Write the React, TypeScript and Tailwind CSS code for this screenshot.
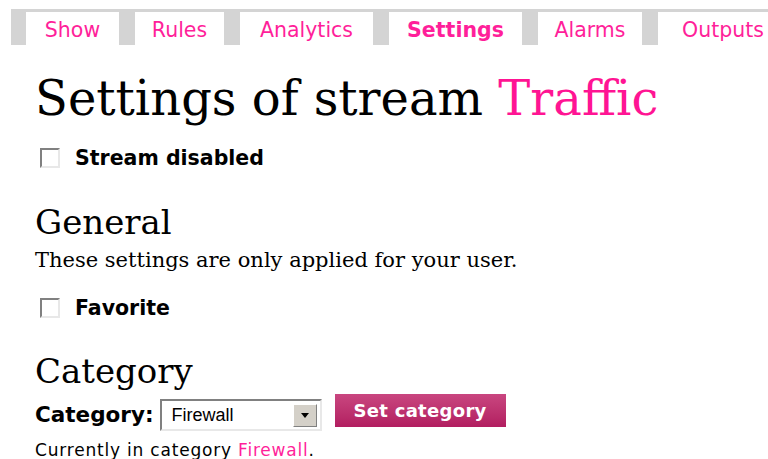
import { useState } from 'react';

const tabs = [
  { label: 'Show', w: 'w-[93px]' },
  { label: 'Rules', w: 'w-[89px]' },
  { label: 'Analytics', w: 'w-[133px]' },
  { label: 'Settings', w: 'w-[133px]', active: true },
  { label: 'Alarms', w: 'w-[104px]' },
  { label: 'Outputs', w: 'w-[130px]' },
];

function Checkbox({ checked, onToggle }: { checked: boolean; onToggle: () => void }) {
  return (
    <span
      onClick={onToggle}
      className="inline-flex w-[20px] h-[20px] border-2 border-t-[#808080] border-l-[#808080] border-b-[#e8e8e8] border-r-[#e8e8e8] bg-white items-center justify-center text-[13px] leading-none"
    >
      {checked ? '✓' : ''}
    </span>
  );
}

export default function App() {
  const [disabled, setDisabled] = useState(false);
  const [favorite, setFavorite] = useState(false);

  return (
    <div className="w-[768px] h-[459px] bg-white overflow-hidden text-black">
      {/* Stream tabs */}
      <nav className="mt-[9px] ml-[11px] h-[36px] bg-[#d4d4d4] flex items-end gap-4 pl-[15px] font-['DejaVu_Sans',sans-serif] text-[20.5px] text-[#ff1f9a]">
        {tabs.map((t) => (
          <a
            key={t.label}
            className={`${t.w} shrink-0 h-[33px] pt-[3px] bg-white flex items-center justify-center ${t.active ? 'font-bold' : ''}`}
          >
            {t.label}
          </a>
        ))}
      </nav>

      <div className="pl-[35px]">
        <h1 className="mt-[25px] font-['DejaVu_Serif',serif] text-[48px] leading-[56px]">
          Settings of stream <span className="text-[#ff1493]">Traffic</span>
        </h1>

        <label className="mt-[20px] ml-[5px] flex items-center gap-[15px] font-['DejaVu_Sans',sans-serif] font-bold text-[20.5px] leading-[24px]">
          <Checkbox checked={disabled} onToggle={() => setDisabled(!disabled)} />
          Stream disabled
        </label>

        <h2 className="mt-[32px] font-['DejaVu_Serif',serif] text-[34px] leading-[40px]">General</h2>
        <p className="mt-[4px] font-['DejaVu_Serif',serif] text-[21px] leading-[28px]">
          These settings are only applied for your user.
        </p>

        <label className="mt-[22px] ml-[5px] flex items-center gap-[15px] font-['DejaVu_Sans',sans-serif] font-bold text-[20.5px] leading-[24px]">
          <Checkbox checked={favorite} onToggle={() => setFavorite(!favorite)} />
          Favorite
        </label>

        <h2 className="mt-[31px] font-['DejaVu_Serif',serif] text-[34px] leading-[40px]">Category</h2>

        <div className="mt-[8px] flex items-center">
          <span className="font-['DejaVu_Sans',sans-serif] font-bold text-[21.5px] mr-[6px]">Category:</span>
          <div className="w-[162px] h-[32px] border-2 border-t-[#808080] border-l-[#808080] border-b-[#e8e8e8] border-r-[#e8e8e8] bg-white flex items-center justify-between pl-[10px] pr-[3px]">
            <span className="font-['Liberation_Sans',sans-serif] text-[18px]">Firewall</span>
            <span className="w-[24px] h-[23px] bg-[#d4d0c8] border border-t-white border-l-white border-b-[#808080] border-r-[#808080] flex items-center justify-center">
              <svg width="8" height="5" viewBox="0 0 8 5">
                <path d="M0 0h8L4 5z" fill="#000" />
              </svg>
            </span>
          </div>
          <button className="ml-[13px] w-[171px] h-[33px] bg-gradient-to-b from-[#c94680] to-[#b21d60] text-white font-['DejaVu_Sans',sans-serif] font-bold text-[18px] tracking-[0.3px] self-start -mt-[5px]">
            Set category
          </button>
        </div>

        <p className="mt-[7px] font-['DejaVu_Sans',sans-serif] text-[17px] tracking-[0.8px]">
          Currently in category <a className="text-[#ff1f9a]">Firewall</a>.
        </p>
      </div>
    </div>
  );
}
